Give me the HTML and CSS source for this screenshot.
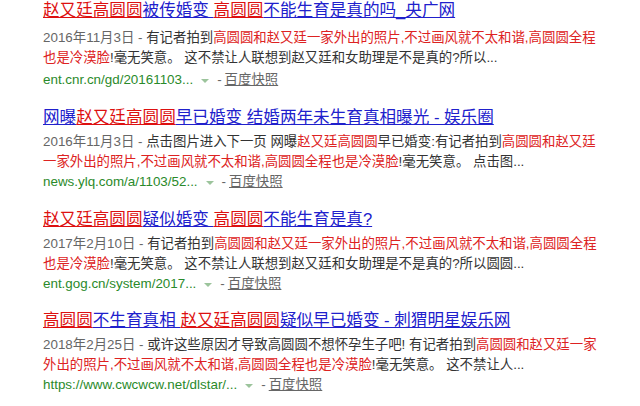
FILE: index.html
```html
<!DOCTYPE html>
<html lang="zh-CN">
<head>
<meta charset="utf-8">
<link rel="stylesheet" href="styles.css">
</head>
<body>
<div class="results">
  <div class="result first">
    <h3 class="title"><a class="hl">赵又廷高圆圆</a><a>被传婚变 </a><a class="hl">高圆圆</a><a>不能生育是真的吗_央广网</a></h3>
    <div class="abs">
      <div class="line"><span class="date">2016年11月3日 - </span>有记者拍到<em>高圆圆和赵又廷一家外出的照片,不过画风就不太和谐,高圆圆全程</em></div>
      <div class="line"><em>也是冷漠脸</em>!毫无笑意。 这不禁让人联想到赵又廷和女助理是不是真的?所以...</div>
    </div>
    <div class="url"><span class="show">ent.cnr.cn/gd/20161103...</span><span class="arrow"></span><span class="dash">-</span><span class="snap">百度快照</span></div>
  </div>
  <div class="result">
    <h3 class="title"><a>网曝</a><a class="hl">赵又廷高圆圆</a><a>早已婚变 结婚两年未生育真相曝光 - 娱乐圈</a></h3>
    <div class="abs">
      <div class="line"><span class="date">2016年11月3日 - </span>点击图片进入下一页 网曝<em>赵又廷高圆圆</em>早已婚变:有记者拍到<em>高圆圆和赵又廷</em></div>
      <div class="line"><em>一家外出的照片,不过画风就不太和谐,高圆圆全程也是冷漠脸</em>!毫无笑意。 点击图...</div>
    </div>
    <div class="url"><span class="show">news.ylq.com/a/1103/52...</span><span class="arrow"></span><span class="dash">-</span><span class="snap">百度快照</span></div>
  </div>
  <div class="result">
    <h3 class="title"><a class="hl">赵又廷高圆圆</a><a>疑似婚变 </a><a class="hl">高圆圆</a><a>不能生育是真?</a></h3>
    <div class="abs">
      <div class="line"><span class="date">2017年2月10日 - </span>有记者拍到<em>高圆圆和赵又廷一家外出的照片,不过画风就不太和谐,高圆圆全程</em></div>
      <div class="line"><em>也是冷漠脸</em>!毫无笑意。 这不禁让人联想到赵又廷和女助理是不是真的?所以圆圆...</div>
    </div>
    <div class="url"><span class="show">ent.gog.cn/system/2017...</span><span class="arrow"></span><span class="dash">-</span><span class="snap">百度快照</span></div>
  </div>
  <div class="result">
    <h3 class="title"><a class="hl">高圆圆</a><a>不生育真相 </a><a class="hl">赵又廷高圆圆</a><a>疑似早已婚变 - 刺猬明星娱乐网</a></h3>
    <div class="abs">
      <div class="line"><span class="date">2018年2月25日 - </span>或许这些原因才导致高圆圆不想怀孕生子吧! 有记者拍到<em>高圆圆和赵又廷一家</em></div>
      <div class="line"><em>外出的照片,不过画风就不太和谐,高圆圆全程也是冷漠脸</em>!毫无笑意。 这不禁让人...</div>
    </div>
    <div class="url"><span class="show">https://www.cwcwcw.net/dlstar/...</span><span class="arrow"></span><span class="dash">-</span><span class="snap">百度快照</span></div>
  </div>
</div>
</body>
</html>
```

FILE: styles.css
```css
html, body {
  margin: 0;
  padding: 0;
  background: #ffffff;
}
body {
  font-family: "Liberation Sans", Arial, "Noto Sans CJK SC", sans-serif;
  color: #333333;
}
.results {
  padding: 0 0 0 43px;
}
.result {
  margin-bottom: 16.5px;
}
.result.first {
  margin-bottom: 17px;
}
.title {
  margin: 0;
  font-size: 16.6px;
  font-weight: normal;
  line-height: 22px;
  white-space: nowrap;
}
.title a {
  color: #2020cc;
  text-decoration: underline;
  text-decoration-color: #2020cc;
}
.title a.hl {
  color: #dd1010;
  text-decoration-color: #dd1010;
}
.abs {
  margin-top: 3px;
  font-size: 13.4px;
  line-height: 20px;
  white-space: nowrap;
}
.first .abs {
  margin-top: 6px;
}
.abs em {
  font-style: normal;
  color: #dd2222;
}
.date {
  color: #666666;
}
.url {
  margin-top: 0;
  font-size: 13.4px;
  line-height: 20px;
  white-space: nowrap;
  display: flex;
  align-items: center;
}
.first .url {
  margin-top: 2px;
}
.show {
  color: #2a8a2a;
}
.arrow {
  width: 0;
  height: 0;
  border-left: 4px solid transparent;
  border-right: 4px solid transparent;
  border-top: 4px solid #9cc49c;
  margin: 2px 8px 0 8px;
}
.dash {
  color: #666666;
  margin-right: 3px;
}
.snap {
  color: #666666;
  text-decoration: underline;
}
```
